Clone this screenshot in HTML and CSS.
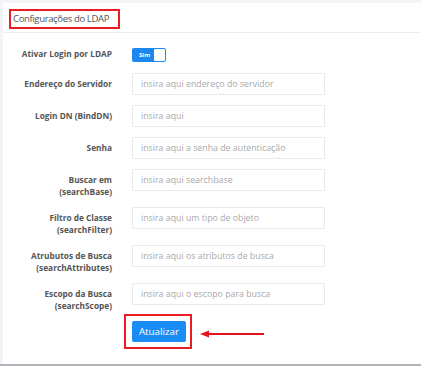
FILE: index.html
```html
<!DOCTYPE html>
<html lang="pt">
<head>
<meta charset="utf-8">
<link rel="stylesheet" href="styles.css">
</head>
<body>
<div class="card">
  <div class="card-header">
    <span class="title">Configurações do LDAP</span>
  </div>
  <div class="card-body">
    <div class="row row-toggle">
      <label class="lbl">Ativar Login por LDAP</label>
      <div class="field">
        <span class="toggle"><span class="toggle-text">Sim</span><span class="knob"></span></span>
      </div>
    </div>
    <div class="row">
      <label class="lbl">Endereço do Servidor</label>
      <div class="field"><input class="input" placeholder="insira aqui endereço do servidor"></div>
    </div>
    <div class="row">
      <label class="lbl">Login DN (BindDN)</label>
      <div class="field"><input class="input" placeholder="insira aqui"></div>
    </div>
    <div class="row">
      <label class="lbl">Senha</label>
      <div class="field"><input class="input" placeholder="insira aqui a senha de autenticação"></div>
    </div>
    <div class="row">
      <label class="lbl">Buscar em<br>(searchBase)</label>
      <div class="field"><input class="input" placeholder="insira aqui searchbase"></div>
    </div>
    <div class="row">
      <label class="lbl">Filtro de Classe<br>(searchFilter)</label>
      <div class="field"><input class="input" placeholder="insira aqui um tipo de objeto"></div>
    </div>
    <div class="row">
      <label class="lbl">Atrubutos de Busca<br>(searchAttributes)</label>
      <div class="field"><input class="input" placeholder="insira aqui os atributos de busca"></div>
    </div>
    <div class="row">
      <label class="lbl">Escopo da Busca<br>(searchScope)</label>
      <div class="field"><input class="input" placeholder="insira aqui o escopo para busca"></div>
    </div>
    <div class="row row-actions">
      <span class="lbl"></span>
      <div class="field actions">
        <span class="highlight"><button class="btn">Atualizar</button></span>
        <svg class="arrow" width="66" height="10" viewBox="0 0 66 10">
          <line x1="6" y1="5" x2="64" y2="5" stroke="#e5141b" stroke-width="2"/>
          <polygon points="0,5 9,1.5 9,8.5" fill="#e5141b"/>
        </svg>
      </div>
    </div>
  </div>
</div>
<div class="bottom-bar"></div>
</body>
</html>
```
FILE: styles.css
```css
html, body {
  margin: 0;
  padding: 0;
}
body {
  width: 421px;
  height: 366px;
  background: #f3f4f8;
  font-family: "Open Sans", "Liberation Sans", sans-serif;
  overflow: hidden;
}
.card {
  margin: 3px 0 0 3px;
  height: 361px;
  background: #ffffff;
  box-sizing: border-box;
}
.card-header {
  height: 29px;
  border-bottom: 1px solid #eceef2;
  display: flex;
  align-items: center;
  padding-left: 6px;
}
.title {
  display: inline-block;
  border: 2px solid #ec1c24;
  padding: 0 9px 0 2px;
  height: 16px;
  line-height: 16px;
  font-size: 9.6px;
  letter-spacing: -0.4px;
  color: #555;
  margin-top: 3px;
}
.card-body {
  padding-top: 10px;
}
.row {
  display: flex;
  align-items: flex-start;
  margin-bottom: 10px;
}
.row-toggle {
  margin-bottom: 8px;
  align-items: center;
  height: 22px;
}
.lbl {
  width: 109px;
  flex: none;
  text-align: right;
  font-weight: 700;
  font-size: 8.3px;
  line-height: 11.5px;
  color: #555;
  padding-top: 5px;
  margin-right: 20px;
}
.row-toggle .lbl {
  padding-top: 0;
}
.field {
  flex: none;
  width: 193px;
}
.input {
  display: block;
  box-sizing: border-box;
  width: 193px;
  height: 22px;
  border: 1px solid #e9eaec;
  border-radius: 1px;
  padding: 0 8px;
  font-family: "Open Sans", "Liberation Sans", sans-serif;
  font-size: 8.8px;
  color: #555;
  background: #fff;
  outline: none;
}
.input::placeholder {
  color: #a9a9a9;
}
.toggle {
  display: flex;
  align-items: center;
  justify-content: space-between;
  box-sizing: border-box;
  width: 34px;
  height: 14px;
  background: #1a88ee;
  border-radius: 2px;
  padding: 0 1px 0 7px;
  margin-top: 1px;
}
.toggle-text {
  color: #fff;
  font-size: 6px;
  font-weight: 700;
  line-height: 12px;
}
.knob {
  width: 11px;
  height: 12px;
  background: #fff;
  border-radius: 1px;
}
.row-actions {
  margin-top: -7px;
}
.actions {
  display: flex;
  align-items: center;
  width: auto;
  margin-left: -8px;
}
.highlight {
  display: inline-block;
  border: 2px solid #ec1c24;
  padding: 5px 4px 5px 6px;
}
.btn {
  display: block;
  width: 54px;
  height: 21px;
  border: none;
  border-radius: 2px;
  background: #1a8cf5;
  color: #fff;
  font-family: "Open Sans", "Liberation Sans", sans-serif;
  font-size: 9.8px;
  padding: 0;
}
.arrow {
  display: block;
  margin-left: 8px;
  margin-top: 5px;
}
.bottom-bar {
  height: 2px;
  background: #b3b3ba;
}
```
